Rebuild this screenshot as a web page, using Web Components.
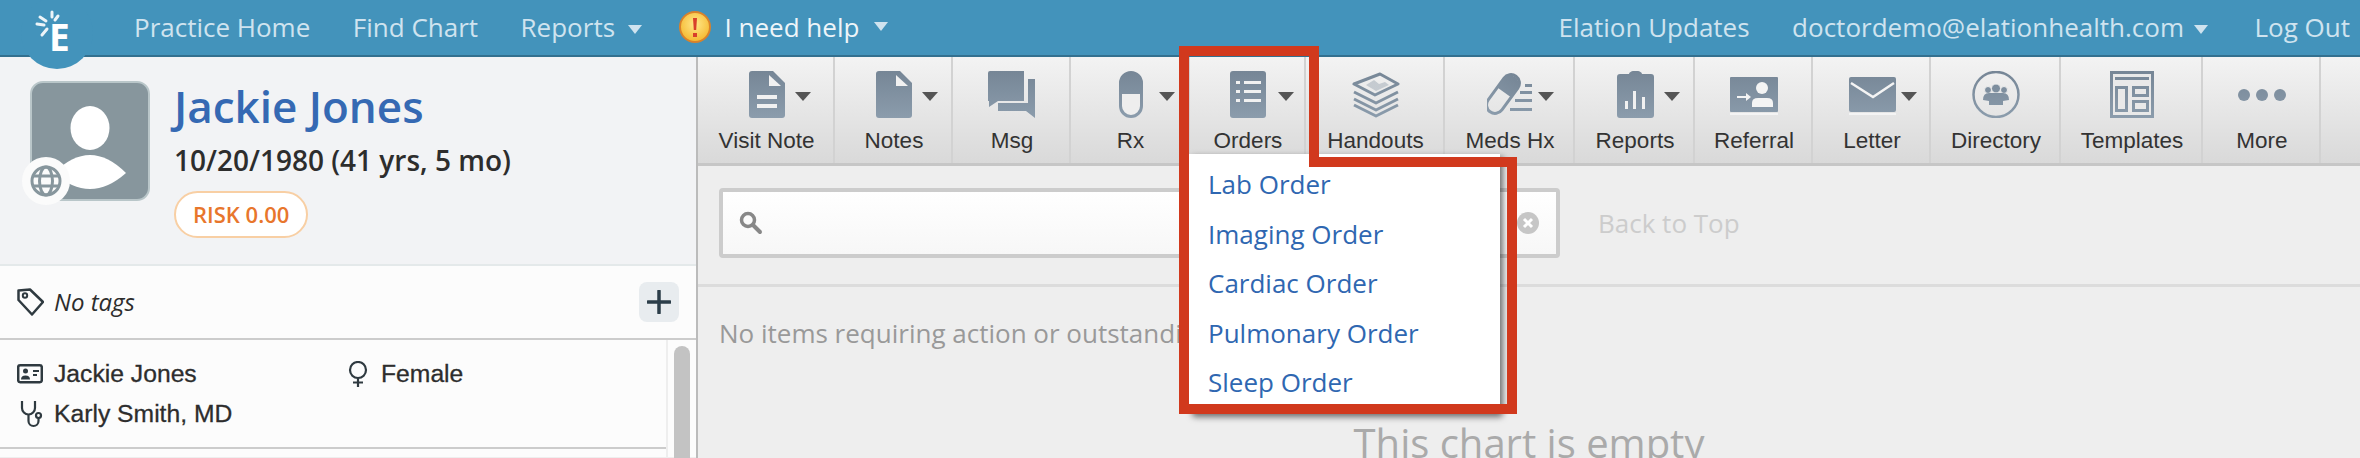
<!DOCTYPE html>
<html>
<head>
<meta charset="utf-8">
<title>Elation</title>
<style>
    html, body { margin: 0; height: 458px; overflow: hidden; background: #eee; }
    body { font-family: "Open Sans", sans-serif; }
    chart-page { display: block; }
</style>
</head>
<body>
<chart-page></chart-page>
<script>
const docShape = 'M3 0H24L36 12V44a3 3 0 0 1-3 3H3a3 3 0 0 1-3-3V3a3 3 0 0 1 3-3Z';
const toolIcons = {
    visit: `<path fill="url(#g)" d="${docShape}"/><path fill="#f1f1f1" d="M20 4V15H32Z"/><path fill="#f1f1f1" d="M8 24h20v4H8zM8 33h20v4H8z"/>`,
    notes: `<path fill="url(#g)" d="${docShape}"/><path fill="#f1f1f1" d="M20 4V15H32Z"/>`,
    msg: `<path fill="url(#g)" d="M2 0H36V30H10L1 36V30H0V2a2 2 0 0 1 2-2Z"/><path fill="url(#g)" d="M40 8H47V47L38 40H10V32H40Z"/>`,
    rx: `<rect x="1.500" y="1.500" width="21" height="44" rx="10.500" fill="#eee" stroke="url(#g)" stroke-width="3"/><path fill="url(#g)" d="M2 23V12a10 10 0 0 1 20 0V23Z"/>`,
    orders: `<rect width="36" height="47" rx="3" fill="url(#g)"/><path fill="#f1f1f1" d="M6 10h4v3H6zM14 10h17v3H14zM6 19h4v3H6zM14 19h17v3H14zM6 28h4v3H6zM14 28h17v3H14z"/>`,
    handouts: `<g fill="none" stroke="url(#g)" stroke-width="3" stroke-linejoin="round"><path d="M2 13 28 3 46 13 23 24Z"/><path d="M2 21 24 32 46 21"/><path d="M2 28 24 39 46 28"/><path d="M2 34 24 45 46 34"/></g><path fill="url(#g)" d="M14 14 22 9 27 13 33 11 37 14 24 20Z" opacity=".35"/>`,
    meds: `<g transform="rotate(36 16 23)"><rect x="7.500" y="1" width="17" height="44" rx="8.500" fill="none" stroke="url(#g)" stroke-width="3"/><path fill="url(#g)" d="M8 21V10a8 8 0 0 1 16 0V21Z"/></g><path fill="url(#g)" d="M38 13h7v3h-7zM33 20h12v3H33zM28 28h17v3H28zM23 37h22v3H23z"/>`,
    reports: `<path fill="url(#g)" d="M3 3H12a6 3 0 0 1 13 0H34a3 3 0 0 1 3 3V44a3 3 0 0 1-3 3H3a3 3 0 0 1-3-3V6a3 3 0 0 1 3-3Z"/><path fill="#f1f1f1" d="M8 30h3v8H8zM16 20h3v18h-3zM25 26h3v12h-3z"/>`,
    referral: `<rect y="6" width="48" height="35" rx="1" fill="url(#g)"/><path fill="#f4f4f4" d="M0 42h48v2H0z"/><circle cx="32" cy="17" r="6" fill="#f4f4f4"/><path fill="#f4f4f4" d="M22 36V32q0-5 6-5h9q6 0 6 5v4ZM7 25h9v-3l5 4-5 4v-3H7Z"/>`,
    letter: `<rect y="6" width="47" height="35" rx="2" fill="url(#g)"/><path fill="none" stroke="#f4f4f4" stroke-width="2.500" d="M2 12 24 26 45 12"/><path fill="#f4f4f4" d="M0 42h47v2H0z"/>`,
    directory: `<circle cx="24" cy="23.500" r="22.500" fill="none" stroke="url(#g)" stroke-width="2.500"/><g fill="url(#g)"><circle cx="16" cy="19" r="3.500" stroke="#eee"/><circle cx="32" cy="19" r="3.500" stroke="#eee"/><circle cx="24" cy="17.500" r="4.500" stroke="#eee"/><path d="M11 29q0-7 6-7h14q6 0 6 7l-6 1v4H17v-4Z"/></g>`,
    templates: `<rect width="44" height="47" fill="url(#g)"/><rect x="3" y="3" width="38" height="41" fill="#e9e9e9"/><path fill="url(#g)" d="M5 6h34v3H5z"/><g fill="none" stroke="url(#g)" stroke-width="3"><rect x="6.500" y="16.500" width="10" height="23"/><rect x="23.500" y="16.500" width="14" height="8"/><rect x="23.500" y="30.500" width="14" height="9"/></g>`,
    more: `<g fill="url(#g)"><circle cx="6" cy="24" r="6"/><circle cx="24" cy="24" r="6"/><circle cx="42" cy="24" r="6"/></g>`
};

class TopNav extends HTMLElement {
    constructor() {
        super();
        this.attachShadow({ mode: 'open' });
        this.shadowRoot.innerHTML = `
            <style>
                :host {
                    display: flex;
                    align-items: center;
                    height: 53px;
                    padding: 0 10px 2px 134px;
                    background: #4393bb;
                    border-bottom: 2px solid #33708f;
                    color: #cfe3ef;
                    font: 26px/1 "Open Sans", sans-serif;
                    white-space: nowrap;
                }
                .group { display: flex; align-items: center; gap: 42.500px; }
                .right { margin-left: auto; }
                .caret {
                    display: inline-block;
                    width: 0;
                    height: 0;
                    margin-left: 13px;
                    vertical-align: 3px;
                    border: 7px solid transparent;
                    border-top: 9px solid #cfe3ef;
                    border-bottom: 0;
                }
                .right .caret { margin-left: 10px; }
                .help { display: flex; align-items: center; color: #eef5f9; margin-left: -6px; }
                .help svg { margin-right: 14px; }
                .help .caret { margin-left: 15px; }
                .logo { position: absolute; left: 21px; top: -3px; }
            </style>
            <svg class="logo" width="72" height="72" viewBox="0 0 72 72">
                <circle cx="36" cy="36" r="36" fill="#4393bb"/>
                <g stroke="#fff" stroke-width="3" stroke-linecap="round" opacity=".9">
                    <path d="M31 15V20M19 20l6 4M16 27l7 1M21 38l5-6M37 19l-3 4"/>
                </g>
                <text x="28" y="54" fill="#fff" font-family="Open Sans" font-weight="700" font-size="37">E</text>
            </svg>
            <div class="group">
                <span>Practice Home</span>
                <span>Find Chart</span>
                <span>Reports<i class="caret"></i></span>
                <span class="help">
                    <svg width="32" height="32" viewBox="0 0 32 32">
                        <defs><radialGradient id="y" cx=".5" cy=".4" r=".6"><stop offset="0" stop-color="#ffe88a"/><stop offset="1" stop-color="#f5b82e"/></radialGradient></defs>
                        <circle cx="16" cy="16" r="15" fill="url(#y)" stroke="#d9822b" stroke-width="2"/>
                        <path fill="#d8402a" d="M14 7h4l-.8 12h-2.400zM14 22h4v4h-4z"/>
                    </svg>
                    I need help<i class="caret"></i>
                </span>
            </div>
            <div class="group right">
                <span>Elation Updates</span>
                <span>doctordemo@elationhealth.com<i class="caret"></i></span>
                <span style="margin-left:4px">Log Out</span>
            </div>
        `;
    }
}

class PatientCard extends HTMLElement {
    constructor() {
        super();
        this.attachShadow({ mode: 'open' });
        this.shadowRoot.innerHTML = `
            <style>
                :host {
                    display: flex;
                    gap: 23px;
                    height: 209px;
                    padding: 24px 0 0 30px;
                    box-sizing: border-box;
                    background: #f2f3f5;
                    border-bottom: 2px solid #e4e9ea;
                }
                .avatar { position: relative; width: 120px; height: 120px; flex: none; }
                .avatar svg { position: absolute; left: 0; top: 0; }
                .avatar .badge { left: -8px; top: 76px; }
                .info { display: flex; flex-direction: column; align-items: flex-start; margin-top: -3px; }
                h1 {
                    margin: 0 0 0 1px;
                    font: 600 44px/56px "Open Sans", sans-serif;
                    color: #3569b3;
                }
                .dob { margin: 7px 0 0 1px; font: 600 28px/38px "Open Sans", sans-serif; color: #2d2d2d; }
                .risk {
                    margin: 12px 0 0 1px;
                    padding: 0 17px;
                    height: 43px;
                    border: 2px solid #f8cfa4;
                    border-radius: 24px;
                    background: #fff;
                    color: #e8762c;
                    font: 600 22px/43px "Open Sans", sans-serif;
                }
            </style>
            <div class="avatar">
                <svg width="120" height="120" viewBox="0 0 120 120">
                    <rect x="1" y="1" width="118" height="118" rx="12" fill="#87969d" stroke="#b9c6c9" stroke-width="2"/>
                    <ellipse cx="60" cy="47" rx="19.500" ry="22" fill="#fff"/>
                    <path fill="#fff" d="M24 92Q42 74 60 74T96 92Q78 108 60 108T24 92Z"/>
                </svg>
                <svg class="badge" width="48" height="48" viewBox="0 0 48 48">
                    <circle cx="24" cy="24" r="24" fill="#fbfbfb"/>
                    <g fill="none" stroke="#87969d" stroke-width="3">
                        <circle cx="24" cy="24" r="14"/>
                        <ellipse cx="24" cy="24" rx="6.500" ry="14"/>
                        <path d="M11 19H37M11 29H37"/>
                    </g>
                </svg>
            </div>
            <div class="info">
                <h1>Jackie Jones</h1>
                <div class="dob">10/20/1980 (41 yrs, 5 mo)</div>
                <div class="risk">RISK 0.00</div>
            </div>
        `;
    }
}

class TagRow extends HTMLElement {
    constructor() {
        super();
        this.attachShadow({ mode: 'open' });
        this.shadowRoot.innerHTML = `
            <style>
                :host {
                    display: flex;
                    align-items: center;
                    height: 72px;
                    padding: 0 17px;
                    background: #fcfcfc;
                    border-bottom: 2px solid #ccc;
                    font: italic 24px "Open Sans", sans-serif;
                    color: #2d2d2d;
                }
                svg { margin-right: 10px; }
                .label { margin-bottom: 2px; }
                button {
                    margin-left: auto;
                    width: 40px;
                    height: 40px;
                    padding: 0;
                    border: 0;
                    border-radius: 8px;
                    background: #e8ecef;
                    display: flex;
                    align-items: center;
                    justify-content: center;
                }
            </style>
            <svg width="27" height="28" viewBox="0 0 27 28">
                <path fill="none" stroke="#2f3a40" stroke-width="2.500" stroke-linejoin="round" d="M1.500 2.500 13 1.500 26 14 15 26.500 1.500 12Z"/>
                <circle cx="8" cy="7.500" r="2.200" fill="none" stroke="#2f3a40" stroke-width="2"/>
            </svg>
            <span class="label">No tags</span>
            <button aria-label="Add tag">
                <svg style="margin:0" width="24" height="24" viewBox="0 0 24 24"><path stroke="#2c3e4a" stroke-width="3.500" stroke-linecap="round" d="M12 1V23M1 12H23"/></svg>
            </button>
        `;
    }
}

class PatientInfo extends HTMLElement {
    constructor() {
        super();
        this.attachShadow({ mode: 'open' });
        this.shadowRoot.innerHTML = `
            <style>
                :host {
                    display: flex;
                    height: 117px;
                    background: #fcfcfc;
                    font: 24.700px "Liberation Sans", Arial, sans-serif;
                    -webkit-text-stroke: .3px #2d2d2d;
                    color: #2d2d2d;
                }
                .rows {
                    width: 666px;
                    height: 109px;
                    box-sizing: border-box;
                    padding-top: 14px;
                    border-bottom: 2px solid #ccc;
                    display: grid;
                    grid-template-columns: 328px 1fr;
                    grid-auto-rows: 40px;
                    align-items: center;
                }
                .cell { display: flex; align-items: center; }
                .ico { width: 26px; height: 26px; margin: 0 11px 0 17px; flex: none; }
                .rail {
                    width: 30px;
                    border-left: 2px solid #eee;
                    box-sizing: border-box;
                    padding: 6px 6px 0 6px;
                }
                .thumb { width: 16px; height: 120px; border-radius: 8px; background: #c3c3c3; }
            </style>
            <div class="rows">
                <div class="cell">
                    <svg class="ico" viewBox="0 0 26 26"><rect x="1.200" y="4.200" width="23.600" height="17" rx="2" fill="none" stroke="#2f3a40" stroke-width="2.500"/><circle cx="8.500" cy="10" r="2.500" fill="#2f3a40"/><path fill="#2f3a40" d="M4 18.500q0-4 4.500-4t4.500 4ZM16 9h6v2h-6zM16 13h4v2h-4z"/></svg>
                    Jackie Jones
                </div>
                <div class="cell">
                    <svg class="ico" style="margin:0 10px 0 17px" viewBox="0 0 26 26"><g fill="none" stroke="#2f3a40" stroke-width="2.200"><circle cx="13" cy="9" r="8"/><path d="M13 17V26M8 21.500H18"/></g></svg>
                    Female
                </div>
                <div class="cell">
                    <svg class="ico" style="height:32px" viewBox="0 0 26 32"><g fill="none" stroke="#2f3a40" stroke-width="2.200"><path d="M5 3V10a6.500 6.500 0 0 0 13 0V3"/><path d="M11.500 17V23a5 5 0 0 0 10 0V20"/><circle cx="21.500" cy="17.500" r="2.500"/></g></svg>
                    Karly Smith, MD
                </div>
            </div>
            <div class="rail"><div class="thumb"></div></div>
        `;
    }
}

class ToolButton extends HTMLElement {
    constructor() {
        super();
        this.attachShadow({ mode: 'open' });
    }

    connectedCallback() {
        const icon = this.getAttribute('icon');
        const w = this.getAttribute('icon-width');
        const caret = this.getAttribute('caret');
        this.shadowRoot.innerHTML = `
            <style>
                :host {
                    display: flex;
                    flex-direction: column;
                    align-items: center;
                    box-sizing: border-box;
                    width: ${this.getAttribute('width')}px;
                    padding: 14px 0 0 2px;
                    border-right: 2px solid #d2d2d2;
                    font: 22.500px/1 "Liberation Sans", Arial, sans-serif;
                    color: #333;
                }
                .icon { position: relative; height: 47px; margin-bottom: 12px; }
                svg { display: block; }
                .caret {
                    position: absolute;
                    top: 21px;
                    left: 100%;
                    margin-left: ${caret}px;
                    border: 8px solid transparent;
                    border-top: 9px solid #555;
                    border-bottom: 0;
                }
            </style>
            <div class="icon">
                <svg width="${w}" height="47" viewBox="0 0 ${w} 47">
                    <defs><linearGradient id="g" gradientUnits="userSpaceOnUse" x1="0" y1="0" x2="0" y2="47"><stop offset="0" stop-color="#768696"/><stop offset="1" stop-color="#8b9cac"/></linearGradient></defs>
                    ${toolIcons[icon]}
                </svg>
                ${caret !== null ? '<i class="caret"></i>' : ''}
            </div>
            <slot></slot>
        `;
    }
}

class ToolBar extends HTMLElement {
    constructor() {
        super();
        this.attachShadow({ mode: 'open' });
        this.shadowRoot.innerHTML = `
            <style>
                :host {
                    display: flex;
                    height: 106px;
                    background: linear-gradient(#f3f3f3, #d9d9d9);
                    border-bottom: 3px solid #c6c6c6;
                }
            </style>
            <slot></slot>
        `;
    }
}

class SearchRow extends HTMLElement {
    constructor() {
        super();
        this.attachShadow({ mode: 'open' });
        this.shadowRoot.innerHTML = `
            <style>
                :host {
                    display: flex;
                    align-items: center;
                    height: 114px;
                    padding: 0 0 4px 21px;
                    background: #eee;
                    border-bottom: 3px solid #dcdcdc;
                    color: #ccc;
                    font: 26px "Open Sans", sans-serif;
                }
                .box {
                    display: flex;
                    align-items: center;
                    justify-content: space-between;
                    width: 841px;
                    height: 70px;
                    box-sizing: border-box;
                    padding: 0 17px 0 16px;
                    background: linear-gradient(#fff, #f7f7f7);
                    border: 4px solid #ccc;
                    border-radius: 4px;
                    margin-right: 38px;
                }
            </style>
            <div class="box">
                <svg width="24" height="24" viewBox="0 0 24 24"><circle cx="9" cy="9" r="6.500" fill="none" stroke="#888" stroke-width="3.500"/><path stroke="#888" stroke-width="4" stroke-linecap="round" d="M14 14 21 21"/></svg>
                <svg width="22" height="22" viewBox="0 0 22 22"><circle cx="11" cy="11" r="11" fill="#c6c6c6"/><path stroke="#fff" stroke-width="3" d="M7 7 15 15M15 7 7 15"/></svg>
            </div>
            Back to Top
        `;
    }
}

class ChartBody extends HTMLElement {
    constructor() {
        super();
        this.attachShadow({ mode: 'open' });
        this.shadowRoot.innerHTML = `
            <style>
                :host {
                    display: block;
                    padding: 28px 0 0 21px;
                    font: 26px/36px "Open Sans", sans-serif;
                    color: #999;
                    white-space: nowrap;
                }
                h2 {
                    margin: 64px 0 0 -21px;
                    text-align: center;
                    font: 40px/56px "Open Sans", sans-serif;
                    color: #aaa;
                }
            </style>
            <div>No items requiring action or outstanding</div>
            <h2>This chart is empty</h2>
        `;
    }
}

class OrdersMenu extends HTMLElement {
    constructor() {
        super();
        this.attachShadow({ mode: 'open' });
        this.shadowRoot.innerHTML = `
            <style>
                :host {
                    position: absolute;
                    left: 1189px;
                    top: 154px;
                    width: 311px;
                    height: 260px;
                    box-sizing: border-box;
                    padding-top: 6px;
                    background: #fff;
                    border-radius: 0 0 4px 4px;
                    box-shadow: 3px 3px 6px rgba(0, 0, 0, .55);
                    font: 26px "Open Sans", sans-serif;
                }
                a { display: block; height: 49.500px; line-height: 49.500px; padding-left: 19px; color: #2f67b1; }
            </style>
            <a>Lab Order</a>
            <a>Imaging Order</a>
            <a>Cardiac Order</a>
            <a>Pulmonary Order</a>
            <a>Sleep Order</a>
        `;
    }
}

class ChartPage extends HTMLElement {
    constructor() {
        super();
        this.attachShadow({ mode: 'open' });
        this.shadowRoot.innerHTML = `
            <style>
                :host { display: block; position: relative; width: 2360px; height: 458px; overflow: hidden; }
                .layout { display: flex; height: 401px; }
                aside { width: 696px; flex: none; border-right: 2px solid #bbb; }
                main { flex: 1; min-width: 0; overflow: hidden; }
                .callout { position: absolute; left: 0; top: 0; pointer-events: none; }
            </style>
            <top-nav></top-nav>
            <div class="layout">
                <aside>
                    <patient-card></patient-card>
                    <tag-row></tag-row>
                    <patient-info></patient-info>
                </aside>
                <main>
                    <tool-bar>
                        <tool-button width="137" icon="visit" icon-width="36" caret="10">Visit Note</tool-button>
                        <tool-button width="118" icon="notes" icon-width="36" caret="10">Notes</tool-button>
                        <tool-button width="118" icon="msg" icon-width="48">Msg</tool-button>
                        <tool-button width="119" icon="rx" icon-width="24" caret="16">Rx</tool-button>
                        <tool-button width="116" icon="orders" icon-width="36" caret="12">Orders</tool-button>
                        <tool-button width="139" icon="handouts" icon-width="48">Handouts</tool-button>
                        <tool-button width="130" icon="meds" icon-width="46" caret="5">Meds Hx</tool-button>
                        <tool-button width="120" icon="reports" icon-width="37" caret="10">Reports</tool-button>
                        <tool-button width="118" icon="referral" icon-width="48">Referral</tool-button>
                        <tool-button width="118" icon="letter" icon-width="47" caret="5">Letter</tool-button>
                        <tool-button width="130" icon="directory" icon-width="48">Directory</tool-button>
                        <tool-button width="142" icon="templates" icon-width="44">Templates</tool-button>
                        <tool-button width="118" icon="more" icon-width="48">More</tool-button>
                    </tool-bar>
                    <search-row></search-row>
                    <chart-body></chart-body>
                </main>
            </div>
            <orders-menu></orders-menu>
            <svg class="callout" width="2360" height="458" viewBox="0 0 2360 458">
                <path fill="none" stroke="#d1391d" stroke-width="10" stroke-linejoin="miter" d="M1184 51H1314V162H1512V409H1184Z"/>
            </svg>
        `;
    }
}

customElements.define('top-nav', TopNav);
customElements.define('patient-card', PatientCard);
customElements.define('tag-row', TagRow);
customElements.define('patient-info', PatientInfo);
customElements.define('tool-button', ToolButton);
customElements.define('tool-bar', ToolBar);
customElements.define('search-row', SearchRow);
customElements.define('chart-body', ChartBody);
customElements.define('orders-menu', OrdersMenu);
customElements.define('chart-page', ChartPage);
</script>
</body>
</html>
